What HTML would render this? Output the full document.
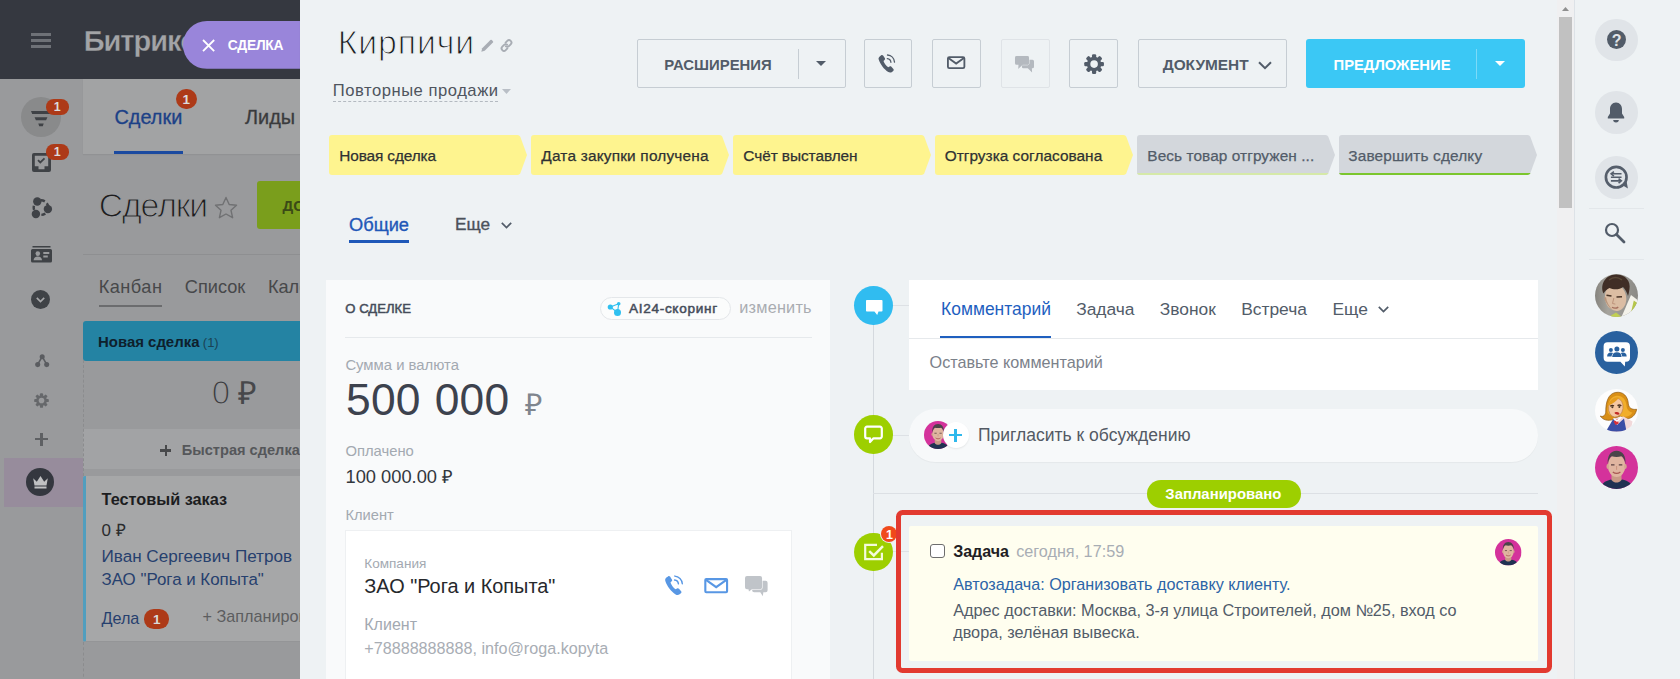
<!DOCTYPE html>
<html lang="ru">
<head>
<meta charset="utf-8">
<title>Кирпичи</title>
<style>
*{box-sizing:border-box;margin:0;padding:0}
html,body{width:1680px;height:679px;overflow:hidden}
body{font-family:"Liberation Sans",sans-serif;background:#eef2f4;position:relative;color:#333}
.a{position:absolute}
.t{position:absolute;line-height:1;white-space:nowrap}
svg{position:absolute;overflow:visible}
#under{position:absolute;left:0;top:0;width:300px;height:679px;background:#999a9c;overflow:hidden}
#panel{position:absolute;left:300px;top:0;width:1258px;height:679px;background:#eef2f4;overflow:hidden}
#scroll{position:absolute;left:1557px;top:0;width:17.800px;height:679px;background:#f0f0f1;border-right:1px solid #dde2e7}
#rbar{position:absolute;left:1574px;top:0;width:106px;height:679px;background:#eef2f4}
</style>
</head>
<body>
<div id="under">
<div class="a" style="left:0px;top:0px;width:300px;height:79px;background:#353840;"></div>
<div class="a" style="left:30.8px;top:33.3px;width:20.4px;height:2.7px;background:#6e7177;"></div>
<div class="a" style="left:30.8px;top:39px;width:20.4px;height:2.7px;background:#6e7177;"></div>
<div class="a" style="left:30.8px;top:45px;width:20.4px;height:2.7px;background:#6e7177;"></div>
<div class="t" style="left:83.7px;top:27px;font-size:29.0px;color:#a3a4a7;font-weight:700;letter-spacing:-1px;-webkit-text-stroke:0.300px #353840">Битрикс</div>
<div class="a" style="left:0px;top:79px;width:83px;height:600px;background:#999a9c;"></div>
<div class="a" style="left:83px;top:79px;width:217px;height:74.6px;background:#a2a3a4;box-shadow:0 1px 1px rgba(0,0,0,.05)"></div>
<div class="t" style="left:114.5px;top:108px;font-size:19.9px;color:#1c4187;font-weight:400;-webkit-text-stroke:0.300px #1c4187">Сделки</div>
<div class="a" style="left:114px;top:150.7px;width:69px;height:3px;background:#1b4aa0;"></div>
<div class="a" style="left:176.35px;top:88.95px;width:20.5px;height:20.5px;border-radius:10.25px;background:#ad3a18"></div><div class="t" style="left:182.6px;top:93px;font-size:13.5px;color:#dcdcdc;font-weight:700;">1</div>
<div class="t" style="left:245.0px;top:108px;font-size:19.9px;color:#3a3b3d;font-weight:400;-webkit-text-stroke:0.300px #3a3b3d">Лиды</div>
<div class="t" style="left:98.8px;top:189px;font-size:33.8px;color:#1d1d1f;font-weight:400;letter-spacing:-1.150px;-webkit-text-stroke:1.100px #999a9c">Сделки</div>
<svg style="left:214px;top:196px" width="24" height="24" viewBox="0 0 24 24"><path d="M12 1.5l3.2 7 7.3.8-5.5 5 1.6 7.4L12 18l-6.6 3.7L7 14.3l-5.5-5 7.3-.8z" fill="none" stroke="#707173" stroke-width="1.4" stroke-linejoin="round"/></svg>
<div class="a" style="left:257px;top:181px;width:60px;height:48px;background:#7a9e1c;border-radius:3px"></div>
<div class="t" style="left:282.5px;top:198px;font-size:15.0px;color:#3b4a16;font-weight:700;">ДОБАВИТЬ</div>
<div class="a" style="left:83px;top:254px;width:217px;height:1px;background:#8e8f91;"></div>
<div class="t" style="left:98.7px;top:278px;font-size:18.2px;color:#47484a;font-weight:400;letter-spacing:0.469px;">Канбан</div>
<div class="a" style="left:99px;top:305px;width:63px;height:2px;background:#6b6c6e;"></div>
<div class="t" style="left:184.8px;top:278px;font-size:18.2px;color:#47484a;font-weight:400;">Список</div>
<div class="t" style="left:267.9px;top:278px;font-size:18.2px;color:#47484a;font-weight:400;">Календарь</div>
<div class="a" style="left:83px;top:321px;width:230px;height:39.7px;background:#2483a3;border-radius:3px 0 0 3px"></div>
<div class="t" style="left:98.0px;top:335px;font-size:14.95px;color:#0e202c;font-weight:700;">Новая сделка</div>
<div class="t" style="left:202.8px;top:336px;font-size:13.0px;color:#1a4254;font-weight:400;">(1)</div>
<div class="t" style="left:211.8px;top:376px;font-size:33.0px;color:#3c3d40;font-weight:400;-webkit-text-stroke:1.200px #999a9c">0</div>
<div class="t" style="left:238.0px;top:377px;font-size:32.0px;color:#47484b;font-weight:400;font-family:'Liberation Serif',serif">₽</div>
<div class="a" style="left:83px;top:429px;width:217px;height:40px;background:#a2a3a5;"></div>
<div class="a" style="left:160.1px;top:449.4px;width:11.3px;height:2.4px;background:#48494b;"></div>
<div class="a" style="left:164.6px;top:444.9px;width:2.4px;height:11.3px;background:#48494b;"></div>
<div class="t" style="left:181.8px;top:443px;font-size:14.6px;color:#55575a;font-weight:700;">Быстрая сделка</div>
<div class="a" style="left:83px;top:360px;width:0;height:116px;border-left:1px dashed #8b8c8e"></div>
<div class="a" style="left:83px;top:642px;width:0;height:40px;border-left:1px dashed #8b8c8e"></div>
<div class="a" style="left:83px;top:476px;width:230px;height:166px;background:#a6a7a8;border-left:3px solid #519ebe;border-radius:2px;border-bottom:1px solid #949597"></div>
<div class="t" style="left:101.5px;top:491px;font-size:16.3px;color:#1c1d1f;font-weight:700;">Тестовый заказ</div>
<div class="t" style="left:101.5px;top:522px;font-size:17.0px;color:#2a2b2d;font-weight:400;">0 ₽</div>
<div class="t" style="left:101.5px;top:548px;font-size:17.1px;color:#26406e;font-weight:400;">Иван Сергеевич Петров</div>
<div class="t" style="left:101.5px;top:572px;font-size:16.9px;color:#26406e;font-weight:400;">ЗАО "Рога и Копыта"</div>
<div class="t" style="left:101.5px;top:610px;font-size:16.2px;color:#26406e;font-weight:400;">Дела</div>
<div class="a" style="left:144.300px;top:609px;width:24.600px;height:19.600px;border-radius:9.800px;background:#ad3a18"></div>
<div class="t" style="left:153.0px;top:613px;font-size:13.5px;color:#d9d9d9;font-weight:700;">1</div>
<div class="t" style="left:202.5px;top:608px;font-size:16.2px;color:#5c5d5f;font-weight:400;">+ Запланировать</div>
<div class="a" style="left:21px;top:97px;width:40px;height:40px;border-radius:20px;background:#898a8b"></div>
<svg style="left:30.8px;top:110.8px" width="20" height="16" viewBox="0 0 20 16"><path d="M0 0h20l-1.2 3H1.200z M3.600 6.300h12.800l-1.300 3H4.900z M7.300 12.500h5.400l-.9 2.800H8.200z" fill="#3f4246"/></svg>
<div class="a" style="left:45.8px;top:99.0px;width:23.2px;height:15.6px;border-radius:7.8px;background:#ad3a18"></div><div class="t" style="left:53.7px;top:101px;font-size:12.5px;color:#dcdcdc;font-weight:700;">1</div>
<svg style="left:32.200px;top:153.300px" width="19" height="19" viewBox="0 0 19 19"><path d="M2 0h15a2 2 0 012 2v15a2 2 0 01-2 2H2a2 2 0 01-2-2V2a2 2 0 012-2z M2.800 2.800v10.500h3.700v3h6v-3h3.700V2.800z" fill="#3f4246" fill-rule="evenodd"/><path d="M6 7.200l2.300 2.300 4.200-4.200" fill="none" stroke="#3f4246" stroke-width="1.800"/></svg>
<div class="a" style="left:45.8px;top:144.0px;width:23.2px;height:15.6px;border-radius:7.8px;background:#ad3a18"></div><div class="t" style="left:53.7px;top:146px;font-size:12.5px;color:#dcdcdc;font-weight:700;">1</div>
<svg style="left:31px;top:196.800px" width="22" height="22" viewBox="0 0 22 22"><circle cx="10" cy="10.600" r="7.300" fill="none" stroke="#3f4247" stroke-width="2.400" stroke-dasharray="4.200 2.600"/><circle cx="6.300" cy="4.500" r="4.200" fill="#3f4247"/><circle cx="16.900" cy="12.100" r="4.200" fill="#3f4247"/><circle cx="4.900" cy="17" r="4.200" fill="#3f4247"/></svg>
<svg style="left:30.900px;top:245.500px" width="21" height="16.500" viewBox="0 0 21 16.500"><rect x="1.500" y="0" width="18" height="1.500" fill="#3f4246"/><path d="M1.500 3h18a1.500 1.500 0 011.500 1.500v10.500a1.500 1.500 0 01-1.500 1.500h-18A1.500 1.500 0 010 15V4.500A1.500 1.500 0 011.500 3z M12.300 6v2h6v-2z M12.300 9.500v2h4.500v-2z" fill="#3f4246" fill-rule="evenodd"/><circle cx="6.800" cy="7.600" r="2.300" fill="#999a9c"/><path d="M2.600 14.300c0-2.700 1.800-3.900 4.200-3.900s4.200 1.200 4.200 3.900z" fill="#999a9c"/></svg>
<div class="a" style="left:31.300px;top:290.200px;width:19px;height:19px;border-radius:10px;background:#3f4246"></div>
<svg style="left:36.300px;top:297.300px" width="9" height="6" viewBox="0 0 9 6"><path d="M0.800 0.800l3.700 3.700 3.700-3.700" fill="none" stroke="#a6a7a9" stroke-width="1.700"/></svg>
<svg style="left:34.800px;top:353.800px" width="14.400" height="13.500" viewBox="0 0 16 15"><path d="M8 3L3 11.5M8 3l5 8.5" stroke="#5a5c60" stroke-width="1.8" fill="none"/><circle cx="8" cy="3" r="2.8" fill="#5a5c60"/><circle cx="3" cy="11.8" r="2.8" fill="#5a5c60"/><circle cx="13" cy="11.8" r="2.8" fill="#5a5c60"/></svg>
<svg style="left:34.2px;top:393.2px" width="15" height="15" viewBox="0 0 24 24"><rect x="9.500" y="0.300" width="5" height="7" rx="1.500" fill="#66686b" transform="rotate(0 12 12)"/><rect x="9.500" y="0.300" width="5" height="7" rx="1.500" fill="#66686b" transform="rotate(45 12 12)"/><rect x="9.500" y="0.300" width="5" height="7" rx="1.500" fill="#66686b" transform="rotate(90 12 12)"/><rect x="9.500" y="0.300" width="5" height="7" rx="1.500" fill="#66686b" transform="rotate(135 12 12)"/><rect x="9.500" y="0.300" width="5" height="7" rx="1.500" fill="#66686b" transform="rotate(180 12 12)"/><rect x="9.500" y="0.300" width="5" height="7" rx="1.500" fill="#66686b" transform="rotate(225 12 12)"/><rect x="9.500" y="0.300" width="5" height="7" rx="1.500" fill="#66686b" transform="rotate(270 12 12)"/><rect x="9.500" y="0.300" width="5" height="7" rx="1.500" fill="#66686b" transform="rotate(315 12 12)"/><circle cx="12" cy="12" r="8.600" fill="#66686b"/><circle cx="12" cy="12" r="4.500" fill="#999a9c"/></svg>
<div class="a" style="left:35.2px;top:437.6px;width:13px;height:2.8px;background:#5e6063;"></div>
<div class="a" style="left:40.3px;top:432.5px;width:2.8px;height:13px;background:#5e6063;"></div>
<div class="a" style="left:4px;top:458px;width:79px;height:49px;background:#978c9c;"></div>
<div class="a" style="left:26px;top:468px;width:28px;height:28px;border-radius:14px;background:#34373f"></div>
<svg style="left:31.5px;top:475px" width="17" height="14" viewBox="0 0 17 14"><path d="M1.2 3.2l3.6 3.6L8.5 1l3.7 5.8 3.6-3.6-1.3 7.3H2.5z M2.5 11.5h12v2h-12z" fill="#c0c1c3"/></svg>
</div>
<div id="panel">
<div class="a" style="left:-300px;top:0;width:1680px;height:679px">
<div class="t" style="left:337.8px;top:26px;font-size:33.8px;color:#1a1c1f;font-weight:400;letter-spacing:0.876px;-webkit-text-stroke:1.100px #eef2f4">Кирпичи</div>
<svg style="left:480.5px;top:39px" width="13" height="13" viewBox="0 0 13 13"><path d="M0.3 12.7l.9-3.4L9.4 1.1a1 1 0 011.4 0l1.1 1.1a1 1 0 010 1.4L3.7 11.8z" fill="#a8adb4"/></svg>
<svg style="left:499.5px;top:39px" width="13" height="13" viewBox="0 0 13 13"><g fill="none" stroke="#a8adb4" stroke-width="1.9" stroke-linecap="round"><path d="M5.6 3.6l1.7-1.7a2.4 2.4 0 013.4 3.4L8.9 7.1a2.4 2.4 0 01-3.1.2"/><path d="M7.4 9.4l-1.7 1.7a2.4 2.4 0 01-3.4-3.4L4.1 5.9a2.4 2.4 0 013.1-.2"/></g></svg>
<div class="t" style="left:332.8px;top:83px;font-size:16.6px;color:#4f555e;font-weight:400;letter-spacing:0.529px;">Повторные продажи</div>
<div class="a" style="left:333px;top:101px;width:165px;height:0;border-top:1px dashed #b4bac1"></div>
<svg style="left:502.400px;top:89.200px" width="9" height="5" viewBox="0 0 9 5"><path d="M0 0h9L4.5 5z" fill="#b9bfc6"/></svg>
<div class="a" style="left:637px;top:39px;width:209px;height:49px;border:1px solid #c6cdd3;border-radius:2px;"></div>
<div class="t" style="left:664.3px;top:58px;font-size:14.9px;color:#525c69;font-weight:700;">РАСШИРЕНИЯ</div>
<div class="a" style="left:797.5px;top:49px;width:1px;height:30px;background:#c6cdd3;"></div>
<svg style="left:816px;top:61px" width="10" height="5" viewBox="0 0 10 5"><path d="M0 0h10L5 5z" fill="#525c69"/></svg>
<div class="a" style="left:864px;top:39px;width:48px;height:49px;border:1px solid #c6cdd3;border-radius:2px;"></div>
<svg style="left:878px;top:53.5px" width="18" height="20" viewBox="0 0 18 20"><path d="M3.2 1.3c.6-.5 1.4-.4 1.9.2l1.7 2.6c.4.6.3 1.3-.2 1.8L5.5 7c.7 2.2 2.7 5 4.700 6.300l1.400-.8c.6-.3 1.300-.2 1.800.3l2 2.200c.500.6.4 1.400-.2 1.900l-1.200 1c-1 .8-2.500.9-3.700.200C6 15.500 2.200 10.300.7 5.600.3 4.400.7 3.200 1.700 2.400z" fill="#525c69"/><path d="M9.300 4.600c2 .2 3.400 1.700 3.600 3.700M9.500 1c3.800.3 6.700 3.300 7 7.100" fill="none" stroke="#525c69" stroke-width="1.300" stroke-linecap="round"/></svg>
<div class="a" style="left:932px;top:39px;width:49px;height:49px;border:1px solid #c6cdd3;border-radius:2px;"></div>
<svg style="left:947px;top:56.300px" width="18.300" height="13.400" viewBox="0 0 20 14"><rect x="1" y="1" width="18" height="12" rx="1.500" fill="none" stroke="#525c69" stroke-width="2"/><path d="M1.500 1.800L10 8l8.500-6.200" fill="none" stroke="#525c69" stroke-width="2"/></svg>
<div class="a" style="left:1001px;top:39px;width:49px;height:49px;border:1px solid #c6cdd3;border-radius:2px;border-color:#dfe3e7"></div>
<svg style="left:1015px;top:56.400px" width="19" height="16.400" viewBox="0 0 19 16.400"><path d="M8.400 3.800h9.100a1.500 1.500 0 011.500 1.500v5.400a1.500 1.500 0 01-1.500 1.500h-.6l.2 4.200-4.300-4.200H8.400a1.500 1.500 0 01-1.500-1.500V5.300a1.500 1.500 0 011.500-1.500z" fill="#b4b9bf"/><path d="M1.500 0h11a1.500 1.500 0 011.500 1.500v5.800a1.500 1.500 0 01-1.500 1.500H7.600L3.200 13l.3-4.200H1.500A1.500 1.500 0 010 7.300V1.500A1.500 1.500 0 011.500 0z" fill="#b4b9bf" stroke="#eef2f4" stroke-width="1" paint-order="stroke"/></svg>
<div class="a" style="left:1069px;top:39px;width:49px;height:49px;border:1px solid #c6cdd3;border-radius:2px;"></div>
<svg style="left:1084px;top:54px" width="20.2" height="20.2" viewBox="0 0 24 24"><rect x="9.500" y="0.300" width="5" height="7" rx="1.500" fill="#525c69" transform="rotate(0 12 12)"/><rect x="9.500" y="0.300" width="5" height="7" rx="1.500" fill="#525c69" transform="rotate(45 12 12)"/><rect x="9.500" y="0.300" width="5" height="7" rx="1.500" fill="#525c69" transform="rotate(90 12 12)"/><rect x="9.500" y="0.300" width="5" height="7" rx="1.500" fill="#525c69" transform="rotate(135 12 12)"/><rect x="9.500" y="0.300" width="5" height="7" rx="1.500" fill="#525c69" transform="rotate(180 12 12)"/><rect x="9.500" y="0.300" width="5" height="7" rx="1.500" fill="#525c69" transform="rotate(225 12 12)"/><rect x="9.500" y="0.300" width="5" height="7" rx="1.500" fill="#525c69" transform="rotate(270 12 12)"/><rect x="9.500" y="0.300" width="5" height="7" rx="1.500" fill="#525c69" transform="rotate(315 12 12)"/><circle cx="12" cy="12" r="8.600" fill="#525c69"/><circle cx="12" cy="12" r="4.500" fill="#eef2f4"/></svg>
<div class="a" style="left:1138px;top:39px;width:149px;height:49px;border:1px solid #c6cdd3;border-radius:2px;"></div>
<div class="t" style="left:1162.7px;top:57px;font-size:15.4px;color:#525c69;font-weight:700;">ДОКУМЕНТ</div>
<svg style="left:1257.5px;top:61px" width="14" height="9" viewBox="0 0 14 9"><path d="M1 1.200l6 6 6-6" fill="none" stroke="#525c69" stroke-width="2"/></svg>
<div class="a" style="left:1306px;top:39px;width:219px;height:49px;background:#3bc8f5;border-radius:3px"></div>
<div class="t" style="left:1333.5px;top:58px;font-size:14.8px;color:#fff;font-weight:700;">ПРЕДЛОЖЕНИЕ</div>
<div class="a" style="left:1476px;top:49px;width:1px;height:30px;background:#7cdaf8;"></div>
<svg style="left:1495px;top:61px" width="10" height="5" viewBox="0 0 10 5"><path d="M0 0h10L5 5z" fill="#fff"/></svg>
<svg style="left:329px;top:135px" width="198" height="40" viewBox="0 0 198 40"><defs><clipPath id="c329"><path d="M3 0H188.5q2 0 2.8 1.8L198 20l-6.7 18.2q-.8 1.8-2.8 1.8H3q-3 0-3-3V3q0-3 3-3z"/></clipPath></defs><g clip-path="url(#c329)"><rect width="198" height="40" fill="#fef48f"/></g></svg><div class="t" style="left:339.3px;top:148px;font-size:15.4px;color:#2f3133;font-weight:400;letter-spacing:-0.131px;-webkit-text-stroke:0.250px #2f3133">Новая сделка</div>
<svg style="left:531px;top:135px" width="198" height="40" viewBox="0 0 198 40"><defs><clipPath id="c531"><path d="M3 0H188.5q2 0 2.8 1.8L198 20l-6.7 18.2q-.8 1.8-2.8 1.8H3q-3 0-3-3V3q0-3 3-3z"/></clipPath></defs><g clip-path="url(#c531)"><rect width="198" height="40" fill="#fef48f"/></g></svg><div class="t" style="left:541.3px;top:148px;font-size:15.4px;color:#2f3133;font-weight:400;letter-spacing:0.196px;-webkit-text-stroke:0.250px #2f3133">Дата закупки получена</div>
<svg style="left:733px;top:135px" width="198" height="40" viewBox="0 0 198 40"><defs><clipPath id="c733"><path d="M3 0H188.5q2 0 2.8 1.8L198 20l-6.7 18.2q-.8 1.8-2.8 1.8H3q-3 0-3-3V3q0-3 3-3z"/></clipPath></defs><g clip-path="url(#c733)"><rect width="198" height="40" fill="#fef48f"/></g></svg><div class="t" style="left:743.3px;top:148px;font-size:15.4px;color:#2f3133;font-weight:400;letter-spacing:-0.058px;-webkit-text-stroke:0.250px #2f3133">Счёт выставлен</div>
<svg style="left:935px;top:135px" width="198" height="40" viewBox="0 0 198 40"><defs><clipPath id="c935"><path d="M3 0H188.5q2 0 2.8 1.8L198 20l-6.7 18.2q-.8 1.8-2.8 1.8H3q-3 0-3-3V3q0-3 3-3z"/></clipPath></defs><g clip-path="url(#c935)"><rect width="198" height="40" fill="#fef48f"/></g></svg><div class="t" style="left:944.7px;top:148px;font-size:15.4px;color:#2f3133;font-weight:400;letter-spacing:0.028px;-webkit-text-stroke:0.250px #2f3133">Отгрузка согласована</div>
<svg style="left:1137px;top:135px" width="198" height="40" viewBox="0 0 198 40"><defs><clipPath id="c1137"><path d="M3 0H188.5q2 0 2.8 1.8L198 20l-6.7 18.2q-.8 1.8-2.8 1.8H3q-3 0-3-3V3q0-3 3-3z"/></clipPath></defs><g clip-path="url(#c1137)"><rect width="198" height="40" fill="#d3d7dc"/><rect y="38" width="198" height="2" fill="#d5e9a8"/></g></svg><div class="t" style="left:1147.3px;top:148px;font-size:15.4px;color:#525c69;font-weight:400;letter-spacing:0.075px;-webkit-text-stroke:0.250px #525c69">Весь товар отгружен ...</div>
<svg style="left:1339px;top:135px" width="198" height="40" viewBox="0 0 198 40"><defs><clipPath id="c1339"><path d="M3 0H188.5q2 0 2.8 1.8L198 20l-6.7 18.2q-.8 1.8-2.8 1.8H3q-3 0-3-3V3q0-3 3-3z"/></clipPath></defs><g clip-path="url(#c1339)"><rect width="198" height="40" fill="#d3d7dc"/><rect y="38" width="198" height="2" fill="#7bc62d"/></g></svg><div class="t" style="left:1348.3px;top:148px;font-size:15.4px;color:#525c69;font-weight:400;letter-spacing:0.150px;-webkit-text-stroke:0.250px #525c69">Завершить сделку</div>
<div class="t" style="left:349.0px;top:216px;font-size:18.25px;color:#1f58b8;font-weight:400;-webkit-text-stroke:0.350px #1f58b8">Общие</div>
<div class="a" style="left:349px;top:240px;width:59.7px;height:3px;background:#1f58b8;"></div>
<div class="t" style="left:455.0px;top:216px;font-size:17.25px;color:#4b515b;font-weight:400;-webkit-text-stroke:0.350px #4b515b">Еще</div>
<svg style="left:500.5px;top:221.5px" width="11" height="7" viewBox="0 0 11 7"><path d="M0.800 0.800l4.700 4.700 4.700-4.700" fill="none" stroke="#525c69" stroke-width="1.700"/></svg>
<div class="a" style="left:326px;top:280px;width:504px;height:410px;background:#f9fafb;"></div>
<div class="t" style="left:345.3px;top:302px;font-size:13.1px;color:#454c5a;font-weight:400;letter-spacing:0.017px;-webkit-text-stroke:0.500px #454c5a">О СДЕЛКЕ</div>
<div class="a" style="left:600px;top:297px;width:130.500px;height:22.500px;border:1px solid #e4e7ea;border-radius:11.500px;background:#fbfcfc"></div>
<svg style="left:606px;top:300px" width="16" height="16" viewBox="0 0 16 16"><path d="M4.300 7l8.400-3.200-1.200 8.600z" stroke="#2fc0f0" stroke-width="1.100" fill="none" stroke-linejoin="round"/><circle cx="4.300" cy="7" r="2.600" fill="#2fc0f0"/><circle cx="12.700" cy="3.800" r="1.800" fill="#2fc0f0"/><circle cx="11.500" cy="12.400" r="3.500" fill="#2fc0f0"/></svg>
<div class="t" style="left:628.9px;top:302px;font-size:13.6px;color:#454c5a;font-weight:400;letter-spacing:0.699px;-webkit-text-stroke:0.500px #454c5a">AI24-скоринг</div>
<div class="t" style="left:739.3px;top:299px;font-size:16.3px;color:#a9acb1;font-weight:400;letter-spacing:0.198px;">изменить</div>
<div class="a" style="left:344.5px;top:337px;width:467.5px;height:1px;background:#e6e9ec;"></div>
<div class="t" style="left:345.4px;top:358px;font-size:14.85px;color:#a3a9b1;font-weight:400;">Сумма и валюта</div>
<div class="t" style="left:346.0px;top:378px;font-size:44.4px;color:#3d424e;font-weight:400;word-spacing:1.500px;letter-spacing:0.200px">500 000</div>
<div class="t" style="left:525.0px;top:390px;font-size:30.0px;color:#7f858e;font-weight:400;">₽</div>
<div class="t" style="left:345.4px;top:444px;font-size:14.8px;color:#a3a9b1;font-weight:400;">Оплачено</div>
<div class="t" style="left:345.5px;top:468px;font-size:18.3px;color:#33373d;font-weight:400;">100 000.00 ₽</div>
<div class="t" style="left:345.4px;top:508px;font-size:14.7px;color:#a3a9b1;font-weight:400;">Клиент</div>
<div class="a" style="left:345px;top:530px;width:447px;height:160px;background:#fff;border:1px solid #eef0f2"></div>
<div class="t" style="left:364.3px;top:557px;font-size:13.55px;color:#a3a9b1;font-weight:400;">Компания</div>
<div class="t" style="left:364.3px;top:577px;font-size:19.9px;color:#26282c;font-weight:400;">ЗАО "Рога и Копыта"</div>
<svg style="left:663.700px;top:574.800px" width="20.500" height="21.500" viewBox="0 0 18 20"><path d="M3.2 1.3c.6-.5 1.4-.4 1.9.2l1.7 2.6c.4.6.3 1.3-.2 1.8L5.5 7c.7 2.2 2.7 5 4.700 6.300l1.400-.8c.6-.3 1.300-.2 1.800.3l2 2.200c.500.6.4 1.400-.2 1.900l-1.200 1c-1 .8-2.500.9-3.700.200C6 15.500 2.200 10.300.7 5.600.3 4.400.7 3.200 1.700 2.400z" fill="#5897e4"/><path d="M9.300 4.600c2 .2 3.400 1.700 3.600 3.700M9.500 1c3.800.3 6.700 3.300 7 7.100" fill="none" stroke="#5897e4" stroke-width="1.300" stroke-linecap="round"/></svg>
<svg style="left:704px;top:577.800px" width="24.400" height="15.400" viewBox="0 0 25 16"><rect x="1.200" y="1.200" width="22.600" height="13.600" rx="1" fill="none" stroke="#5897e4" stroke-width="2.200"/><path d="M1.500 1.800L12.500 9.500l11-7.700" fill="none" stroke="#5897e4" stroke-width="2.200"/></svg>
<svg style="left:745.4px;top:576.2px" width="22.8" height="20.4" viewBox="0 0 23 20.500"><path d="M9.200 4.800h11.600a2 2 0 012 2v7.600a2 2 0 01-2 2h-2.300l-.5 4-2.600-4H9.200a2 2 0 01-2-2V6.800a2 2 0 012-2z" fill="#c0c4c9"/><path d="M2 0h13.200a2 2 0 012 2v9.400a2 2 0 01-2 2H7l-3 2.300-.5-2.300H2a2 2 0 01-2-2V2A2 2 0 012 0z" fill="#c0c4c9" stroke="#fff" stroke-width="1.100" paint-order="stroke"/></svg>
<div class="t" style="left:364.3px;top:617px;font-size:16.0px;color:#a3a9b1;font-weight:400;">Клиент</div>
<div class="t" style="left:364.3px;top:640px;font-size:16.15px;color:#a8adb4;font-weight:400;">+78888888888, info@roga.kopyta</div>
<div class="a" style="left:873px;top:324px;width:1px;height:360px;background:#d4d9de;"></div>
<div class="a" style="left:893px;top:305px;width:16px;height:1px;background:#dde1e5;"></div>
<div class="a" style="left:854px;top:286px;width:38.800px;height:38.800px;border-radius:50%;background:#30bcf0"></div>
<svg style="left:865.500px;top:300px" width="16.500" height="15" viewBox="0 0 16.500 15"><path d="M.8 0h14.900a.8.800 0 01.8.8v9.900a.8.800 0 01-.8.8h-3.200l-1.300 3.400-2.800-3.400H.8a.8.800 0 01-.8-.8V.8A.8.800 0 01.8 0z" fill="#fff"/></svg>
<div class="a" style="left:909px;top:279.5px;width:629px;height:110.5px;background:#fff;"></div>
<div class="t" style="left:941.1px;top:301px;font-size:17.45px;color:#1f5fbf;font-weight:400;">Комментарий</div>
<div class="t" style="left:1076.2px;top:301px;font-size:17.4px;color:#525c69;font-weight:400;">Задача</div>
<div class="t" style="left:1159.8px;top:301px;font-size:17.4px;color:#525c69;font-weight:400;">Звонок</div>
<div class="t" style="left:1241.2px;top:301px;font-size:17.4px;color:#525c69;font-weight:400;">Встреча</div>
<div class="t" style="left:1332.5px;top:301px;font-size:17.4px;color:#525c69;font-weight:400;">Еще</div>
<svg style="left:1378.400px;top:306px" width="11" height="7" viewBox="0 0 11 7"><path d="M0.800 0.800l4.700 4.700 4.700-4.700" fill="none" stroke="#525c69" stroke-width="1.700"/></svg>
<div class="a" style="left:909px;top:338px;width:629px;height:1px;background:#e6e9ec;"></div>
<div class="a" style="left:940.3px;top:335.5px;width:110.6px;height:2.5px;background:#1f5fbf;"></div>
<div class="t" style="left:929.6px;top:354px;font-size:16.2px;color:#7b818a;font-weight:400;">Оставьте комментарий</div>
<div class="a" style="left:854px;top:415px;width:38.600px;height:38.600px;border-radius:50%;background:#9dcf00"></div>
<svg style="left:864px;top:425.200px" width="19" height="19" viewBox="0 0 19 18"><path d="M3 1.200h13a1.800 1.800 0 011.800 1.800v8a1.800 1.800 0 01-1.800 1.800H9.500L6 16.500V12.800H3A1.800 1.800 0 011.200 11V3A1.800 1.800 0 013 1.200z" fill="none" stroke="#fff" stroke-width="2.200" stroke-linejoin="round"/></svg>
<div class="a" style="left:893px;top:435px;width:16px;height:1px;background:#dde1e5;"></div>
<div class="a" style="left:909px;top:409.300px;width:629px;height:52.400px;border-radius:26.200px;background:#f7f9fa;box-shadow:0 1px 1px rgba(0,0,0,.04)"></div>
<svg style="left:924px;top:421px" width="28" height="28" viewBox="0 0 43 43"><defs><clipPath id="av924"><circle cx="21.500" cy="21.500" r="21.500"/></clipPath></defs><g clip-path="url(#av924)"><rect width="43" height="43" fill="#d4329b"/><path d="M5.500 43c.5-5 4-8 10.500-9.500l5.500 1.500 5.500-1.500c6.500 1 10.500 4.500 11 9.500z" fill="#203252"/><path d="M16.500 29h10v5c-1.500 2-3.300 2.600-5 2.600s-3.500-.6-5-2.600z" fill="#c99a86"/><ellipse cx="21.600" cy="19.800" rx="8.800" ry="11.300" fill="#e0b5a0"/><ellipse cx="12.800" cy="20.500" rx="1.300" ry="2.400" fill="#d4a591"/><ellipse cx="30.400" cy="20.500" rx="1.300" ry="2.400" fill="#d4a591"/><path d="M12.800 17.500c-.8-7.500 3-12.800 8.800-12.800s9.600 5.300 8.800 12.800c-.8-4-2.500-6.500-4-7.200-3 .8-6.600.8-9.600 0-1.500.7-3.200 3.200-4 7.200z" fill="#4b4549"/><path d="M16 18.800h3.500M23.800 18.800h3.500" stroke="#5a4040" stroke-width="1.200"/><path d="M17.800 26c2.400 1.800 5.200 1.800 7.600 0" stroke="#a85a55" stroke-width="1.300" fill="none"/><path d="M21.600 20v3.800" stroke="#c9957f" stroke-width="1"/></g></svg>
<div class="a" style="left:942.500px;top:421.800px;width:26.300px;height:26.300px;border-radius:50%;background:#fff;box-shadow:0 1px 2px rgba(0,0,0,.08)"></div>
<div class="a" style="left:949.2px;top:433.6px;width:13px;height:2.8px;background:#2fb8ec;"></div>
<div class="a" style="left:954.3px;top:428.5px;width:2.8px;height:13px;background:#2fb8ec;"></div>
<div class="t" style="left:978.0px;top:427px;font-size:17.5px;color:#535a64;font-weight:400;">Пригласить к обсуждению</div>
<div class="a" style="left:873px;top:493px;width:665px;height:1px;background:#dce0e4;"></div>
<div class="a" style="left:1147px;top:480px;width:154px;height:28px;border-radius:14px;background:#9dcf00"></div>
<div class="t" style="left:1165.3px;top:487px;font-size:14.9px;color:#fff;font-weight:700;">Запланировано</div>
<div class="a" style="left:909px;top:526px;width:629px;height:134.8px;background:#fffeef;border-radius:2px"></div>
<div class="a" style="left:893px;top:551px;width:16px;height:1px;background:#dde1e5;"></div>
<div class="a" style="left:854px;top:532.700px;width:38.600px;height:38.300px;border-radius:50%;background:#9dcf00"></div>
<svg style="left:863px;top:541.500px" width="22" height="20" viewBox="0 0 22 20"><path d="M14 2.800H2.200v14.400h16.700V10.800" fill="none" stroke="#f4fbdc" stroke-width="2.200"/><path d="M6.200 9.200l4.600 4.300 9.200-9.300" fill="none" stroke="#f4fbdc" stroke-width="2.500"/></svg>
<div class="a" style="left:881.200px;top:526px;width:16px;height:16px;border-radius:50%;background:#f04a1b;box-shadow:0 0 0 1px #eef2f4"></div>
<div class="t" style="left:885.9px;top:529px;font-size:12.5px;color:#fff;font-weight:700;">1</div>
<div class="a" style="left:930px;top:543.500px;width:14.500px;height:14.500px;border:1.500px solid #6d6d6d;border-radius:3px;background:#fff"></div>
<div class="t" style="left:953.2px;top:544px;font-size:16.0px;color:#1e2023;font-weight:700;">Задача</div>
<div class="t" style="left:1016.2px;top:543px;font-size:16.2px;color:#a8adb4;font-weight:400;">сегодня, 17:59</div>
<svg style="left:1495px;top:538.6px" width="26.5" height="26.5" viewBox="0 0 43 43"><defs><clipPath id="av1495"><circle cx="21.500" cy="21.500" r="21.500"/></clipPath></defs><g clip-path="url(#av1495)"><rect width="43" height="43" fill="#d4329b"/><path d="M5.500 43c.5-5 4-8 10.500-9.500l5.500 1.500 5.500-1.500c6.500 1 10.500 4.500 11 9.500z" fill="#203252"/><path d="M16.500 29h10v5c-1.500 2-3.300 2.600-5 2.600s-3.500-.6-5-2.600z" fill="#c99a86"/><ellipse cx="21.600" cy="19.800" rx="8.800" ry="11.300" fill="#e0b5a0"/><ellipse cx="12.800" cy="20.500" rx="1.300" ry="2.400" fill="#d4a591"/><ellipse cx="30.400" cy="20.500" rx="1.300" ry="2.400" fill="#d4a591"/><path d="M12.800 17.500c-.8-7.500 3-12.800 8.800-12.800s9.600 5.300 8.800 12.800c-.8-4-2.500-6.500-4-7.200-3 .8-6.600.8-9.600 0-1.500.7-3.200 3.200-4 7.200z" fill="#4b4549"/><path d="M16 18.800h3.500M23.800 18.800h3.500" stroke="#5a4040" stroke-width="1.200"/><path d="M17.800 26c2.400 1.800 5.200 1.800 7.600 0" stroke="#a85a55" stroke-width="1.300" fill="none"/><path d="M21.600 20v3.800" stroke="#c9957f" stroke-width="1"/></g></svg>
<div class="t" style="left:953.2px;top:576px;font-size:16.2px;color:#2c65a8;font-weight:400;">Автозадача: Организовать доставку клиенту.</div>
<div class="t" style="left:953.2px;top:602px;font-size:16.25px;color:#525c69;font-weight:400;">Адрес доставки: Москва, 3-я улица Строителей, дом №25, вход со</div>
<div class="t" style="left:953.2px;top:624px;font-size:16.25px;color:#525c69;font-weight:400;">двора, зелёная вывеска.</div>
<div class="a" style="left:895.500px;top:510px;width:656.300px;height:162.800px;border:5px solid #e23a30;border-radius:6.500px"></div>
</div>
</div>
<div id="scroll"></div>
<div class="a" style="left:1559px;top:17px;width:13.1px;height:191px;background:#c1c1c1;"></div>
<svg style="left:1562px;top:7px" width="7" height="4" viewBox="0 0 7 4"><path d="M0 4h7L3.500 0z" fill="#8f8f8f"/></svg>
<div id="rbar"></div>
<div class="a" style="left:1574px;top:0px;width:1px;height:679px;background:#dde2e7;"></div>
<div class="a" style="left:1595.0px;top:18.499999999999996px;width:42.600px;height:42.600px;border-radius:50%;background:#e0e4e8"></div>
<div class="a" style="left:1595.0px;top:91.0px;width:42.600px;height:42.600px;border-radius:50%;background:#e0e4e8"></div>
<div class="a" style="left:1595.0px;top:156.1px;width:42.600px;height:42.600px;border-radius:50%;background:#e0e4e8"></div>
<div class="a" style="left:1606.8px;top:30.299999999999997px;width:19px;height:19px;border-radius:50%;background:#525c69"></div>
<div class="t" style="left:1611.7px;top:33px;font-size:16.0px;color:#e0e4e8;font-weight:700;">?</div>
<svg style="left:1607.3px;top:101.8px" width="18" height="21" viewBox="0 0 18 21"><path d="M9 0.500c-3.800 0-6 3-6 6.500v4.500L0.800 15v1.500h16.400V15L15 11.500V7c0-3.500-2.200-6.500-6-6.500z" fill="#525c69"/><path d="M6.200 18h5.600a2.800 2.500 0 01-5.600 0z" fill="#525c69"/></svg>
<svg style="left:1604.1px;top:165.20000000000002px" width="25.500" height="25.500" viewBox="0 0 24 24"><circle cx="11.500" cy="11.500" r="9.700" fill="none" stroke="#555e6b" stroke-width="2.500"/><path d="M17.500 19l5 3-1.200-6.200z" fill="#555e6b"/><path d="M7 8.300h9.500M6.500 11.600h10M6.500 14.900h9.500" stroke="#555e6b" stroke-width="1.500"/><path d="M9.300 6.200L6.700 8.300l2.600 2.100M13.700 12.800l2.600 2.100-2.600 2.100" stroke="#555e6b" stroke-width="1.500" fill="none"/></svg>
<div class="a" style="left:1588.7px;top:208px;width:55px;height:1px;background:#e3e7ea;"></div>
<svg style="left:1604px;top:222px" width="22" height="22" viewBox="0 0 22 22"><circle cx="8" cy="8" r="6" fill="none" stroke="#525c69" stroke-width="2.200"/><path d="M12.500 12.500l7.500 7.500" stroke="#525c69" stroke-width="2.800" stroke-linecap="round"/></svg>
<div class="a" style="left:1588.7px;top:259px;width:55px;height:1px;background:#e3e7ea;"></div>
<svg style="left:1595px;top:273.7px" width="43" height="43" viewBox="0 0 43 43"><defs><clipPath id="ra1"><circle cx="21.500" cy="21.500" r="21.500"/></clipPath></defs><g clip-path="url(#ra1)"><defs><linearGradient id="g1" x1="0" x2="1"><stop offset="0" stop-color="#86847e"/><stop offset=".3" stop-color="#a6a49d"/><stop offset="1" stop-color="#8b8a86"/></linearGradient><filter id="bl1"><feGaussianBlur stdDeviation=".55"/></filter></defs><rect width="43" height="43" fill="url(#g1)"/><g filter="url(#bl1)"><path d="M26 44l10-23 8 6v17z" fill="#f3f2ea"/><path d="M38.800 26.500l3.500 2.500-4.500 13-2.500-.5z" fill="#b5c649"/><path d="M16 41.500l5-3 7 5.500H15z" fill="#c0cf52"/><ellipse cx="20.600" cy="23.800" rx="10.600" ry="13.300" fill="#dbbda3" transform="rotate(-10 20.600 23.800)"/><path d="M9 24c2 5 5 10 9 12.500-4-4-6.500-9-7-13.500z" fill="#b8967d"/><path d="M8.500 19.500C5 12 9 1.500 20 .5 30 -.3 36 7 34.500 15c-.5 3-.8 5-1.500 7-1-3.500-2.500-6.500-5-9-3 2.500-9 3.200-13.500 1-2.500 1.200-4.500 3-6 5.500z" fill="#3f2f25"/><path d="M14 6c4-3 9-3 13 0" stroke="#5a4838" stroke-width="1.500" fill="none"/><path d="M11.500 21.300l5 .8M21.500 23l5.500-.2" stroke="#4a3528" stroke-width="1.500"/><path d="M17 33.300c2.200 1.200 4.500 1 6.300-.2" stroke="#a5705e" stroke-width="1.300" fill="none"/><path d="M18.800 24l-1.300 5.500 2.800.6" stroke="#b98d75" stroke-width=".9" fill="none"/></g></g></svg>
<svg style="left:1595px;top:330.9px" width="43" height="43" viewBox="0 0 43 43"><defs><clipPath id="ra2"><circle cx="21.500" cy="21.500" r="21.500"/></clipPath></defs><g clip-path="url(#ra2)"><rect width="43" height="43" fill="#29619f"/><path d="M12.600 11.200h18.400a4 4 0 014 4v11.500a4 4 0 01-4 4h-.800l-.400 4.800-4.400-4.800H12.600a4 4 0 01-4-4V15.200a4 4 0 014-4z" fill="#fff"/><g fill="#29619f"><circle cx="21.900" cy="18.100" r="2.500"/><path d="M17.200 25.900c.2-3.300 1.800-4.700 4.700-4.700s4.500 1.400 4.700 4.700z"/><circle cx="15.900" cy="19" r="2"/><path d="M12.100 25.500c.2-2.800 1.400-3.900 3.800-3.900.9 0 1.600.2 2.200.5-.9.900-1.400 2-1.600 3.400z"/><circle cx="27.900" cy="19" r="2"/><path d="M31.700 25.500c-.2-2.800-1.400-3.900-3.800-3.900-.9 0-1.600.2-2.200.5.900.9 1.400 2 1.600 3.400z"/></g></g></svg>
<svg style="left:1595px;top:388.9px" width="43" height="43" viewBox="0 0 43 43"><defs><clipPath id="ra3"><circle cx="21.500" cy="21.500" r="21.500"/></clipPath></defs><g clip-path="url(#ra3)"><rect width="43" height="43" fill="#fdfdfd"/><path d="M5.300 27c3 1.500 5.500-1 5.500-5 0-8 2-17 9.500-18.500 8-1.500 12.500 4 13 11 .3 4 3 6.500 8.400 5.800-1 5-4 8.500-8 9.200-3 .6-6-.5-8.500-2.500l-7 3.500c-5 1.800-10.500.5-12.900-3.500z" fill="#d98f17" stroke="#8f5a12" stroke-width=".7"/><path d="M12.500 23c0-8 2-14.500 8-16 6.500-1.200 10.500 3.500 11 9.500.3 4 2.500 6.500 6 7-2 3-4.500 4.300-7.500 4.300-3.500 0-6-1.500-8-4l-5 3c-2.200-.5-3.700-1.800-4.500-3.800z" fill="#f1ae2b"/><ellipse cx="20.800" cy="18.600" rx="7.200" ry="9.500" fill="#f4c7a1" stroke="#b97d52" stroke-width=".6" transform="rotate(8 20.800 18.600)"/><path d="M13.200 16.500c1.500-5.500 6.500-8.500 10.800-7.800-2.200 3.200-6.500 6.300-10.800 7.800z" fill="#e59d1e"/><path d="M15.200 17.300c1.200-.9 2.700-1 3.800-.3M22.500 16.600c1.200-.8 2.800-.6 3.800.4" stroke="#4a2f1c" stroke-width="1.400" fill="none"/><circle cx="17.400" cy="18.300" r="1" fill="#4a3a2a"/><circle cx="24.300" cy="17.900" r="1" fill="#4a3a2a"/><ellipse cx="22" cy="24.300" rx="2.500" ry="1.300" fill="#c22a26" transform="rotate(10 22 24.300)"/><path d="M18.500 29.500l10-2 9 5-2 10.500H14z" fill="#f1d9da"/><path d="M12 40.500l6.500-11 3.500 6.500 7-6.500 2.500 13H11z" fill="#3b4fa6"/><path d="M18.500 32.500l4-2.500 1.200 4.500-3.200 1.500z" fill="#d8323a"/><path d="M18.500 29.500l3.500 2.500 4.500-4" stroke="#fff" stroke-width="1.500" fill="none"/></g></svg>
<svg style="left:1595px;top:445.6px" width="43" height="43" viewBox="0 0 43 43"><defs><clipPath id="ra4"><circle cx="21.500" cy="21.500" r="21.500"/></clipPath></defs><g clip-path="url(#ra4)"><rect width="43" height="43" fill="#d4329b"/><path d="M5.500 43c.5-5 4-8 10.500-9.500l5.500 1.500 5.500-1.500c6.500 1 10.500 4.500 11 9.500z" fill="#203252"/><path d="M16.500 29h10v5c-1.500 2-3.300 2.600-5 2.600s-3.500-.6-5-2.600z" fill="#c99a86"/><ellipse cx="21.600" cy="19.800" rx="8.800" ry="11.300" fill="#e0b5a0"/><ellipse cx="12.800" cy="20.500" rx="1.300" ry="2.400" fill="#d4a591"/><ellipse cx="30.400" cy="20.500" rx="1.300" ry="2.400" fill="#d4a591"/><path d="M12.800 17.500c-.8-7.500 3-12.800 8.800-12.800s9.600 5.300 8.800 12.800c-.8-4-2.500-6.500-4-7.200-3 .8-6.600.8-9.600 0-1.500.7-3.200 3.200-4 7.200z" fill="#4b4549"/><path d="M16 18.800h3.500M23.800 18.800h3.500" stroke="#5a4040" stroke-width="1.200"/><path d="M17.800 26c2.400 1.800 5.200 1.800 7.600 0" stroke="#a85a55" stroke-width="1.300" fill="none"/><path d="M21.600 20v3.800" stroke="#c9957f" stroke-width="1"/></g></svg>
<div class="a" style="left:182.800px;top:20.800px;width:170.700px;height:48px;border-radius:24px;background:#9985da;clip-path:inset(0 53.500px 0 0)"></div>
<svg style="left:201.800px;top:39.200px" width="13.200" height="13.200" viewBox="0 0 13 13"><path d="M1 1l11 11M12 1L1 12" stroke="#fff" stroke-width="1.800"/></svg>
<div class="t" style="left:227.8px;top:39px;font-size:13.8px;color:#fff;font-weight:700;letter-spacing:-0.239px;">СДЕЛКА</div>
</body>
</html>
